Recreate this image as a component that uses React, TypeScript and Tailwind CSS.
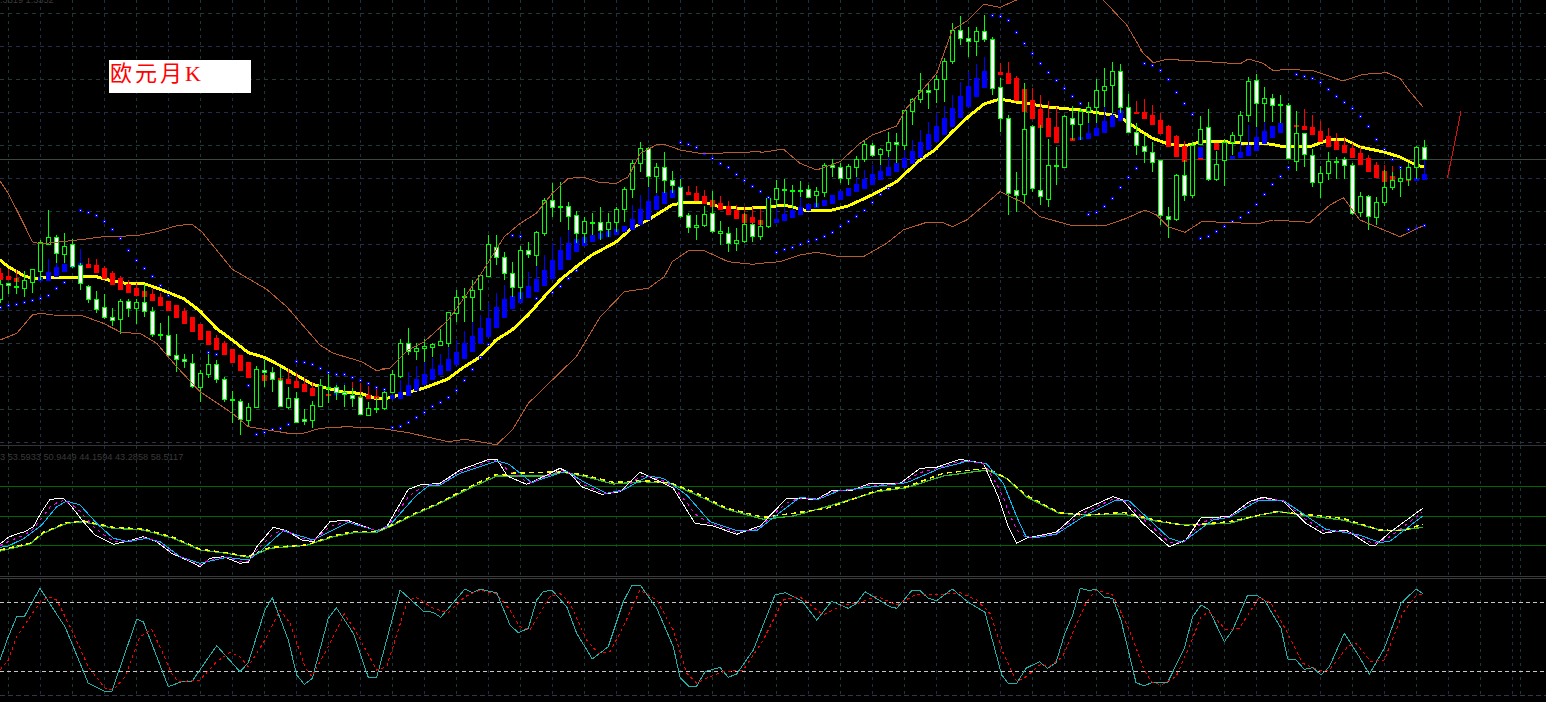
import React from 'react';

type Pt = [number, number];

// "x,y x,y ..." read off 3x crops, so every run has its own crop origin
const run = (ox: number, oy: number, s: string, maxX = Infinity): Pt[] =>
  s.trim().split(/\s+/).map(t => {
    const [x, y] = t.split(',').map(Number);
    return [ox + x / 3, oy + y / 3] as Pt;
  }).filter(p => p[0] < maxX);

const toPoints = (pts: Pt[]) => pts.map(p => `${p[0].toFixed(1)},${p[1].toFixed(1)}`).join(' ');

const interp = (pts: Pt[], x: number) => {
  for (let i = 1; i < pts.length; i++) {
    if (x <= pts[i][0]) {
      const [a, b] = [pts[i - 1], pts[i]];
      return a[1] + ((x - a[0]) / (b[0] - a[0])) * (b[1] - a[1]);
    }
  }
  return pts[pts.length - 1][1];
};

// high, body top, body bottom, low, white fill (index = bar number, x = 8 * index)
const BARS: number[][] = [
  [280,284,299,303,0],[283,283,285,294,1],[278,286,286,294,0],[271,280,288,297,0],[269,269,282,293,0],[240,242,271,280,0],[210,237,244,244,0],[235,237,253,263,1],[233,246,254,263,0],[239,244,266,268,1],
  [263,265,283,290,1],[285,286,299,303,1],[291,299,309,313,1],[294,307,317,319,1],[308,317,320,326,1],[299,301,319,334,0],[299,301,308,317,1],[299,302,308,324,0],[284,302,311,317,1],[307,311,334,337,1],
  [323,334,334,340,0],[316,335,355,357,1],[334,355,359,372,1],[354,359,361,368,1],[354,363,386,388,1],[370,373,387,402,0],[354,364,374,378,0],[360,364,379,383,1],[377,379,399,402,1],[391,399,400,423,1],
  [399,401,419,435,1],[403,407,420,427,0],[366,369,407,408,0],[360,370,372,387,1],[367,372,379,392,1],[368,380,406,407,1],[387,398,407,409,0],[392,398,422,423,1],[409,419,421,425,1],[401,405,420,428,0],
  [379,385,406,407,0],[374,387,387,403,0],[385,387,392,400,1],[385,392,394,407,1],[388,395,398,407,1],[394,397,414,415,1],[402,408,415,416,0],[397,408,408,413,0],[389,392,408,410,0],[370,374,392,393,0],
  [339,343,376,378,0],[328,343,351,355,1],[343,348,351,360,0],[339,346,348,362,0],[343,344,347,357,0],[329,341,345,346,0],[312,312,343,347,0],[290,297,313,322,0],[288,296,296,322,0],[280,290,297,322,0],
  [274,275,289,310,0],[235,244,276,277,0],[235,247,257,265,1],[252,257,273,280,1],[262,273,287,297,1],[246,250,287,299,0],[242,250,254,258,1],[231,232,255,266,0],[198,200,233,236,0],[183,200,207,217,1],
  [182,206,206,222,0],[202,206,216,230,1],[211,215,233,243,1],[217,221,233,243,0],[213,222,222,235,0],[207,222,230,240,1],[213,222,229,237,0],[207,209,222,232,0],[187,189,209,222,0],[160,163,189,198,0],
  [142,148,163,172,0],[147,148,176,187,1],[163,167,176,193,0],[152,167,180,193,1],[171,180,185,193,1],[179,187,216,218,1],[213,215,227,233,1],[215,225,227,240,0],[206,214,225,227,0],[191,213,231,233,1],
  [221,231,233,245,0],[227,233,243,252,1],[228,240,243,251,0],[213,224,241,243,0],[223,224,236,242,1],[220,226,236,240,0],[197,198,226,228,0],[180,188,199,207,0],[179,189,189,207,0],[185,190,190,208,0],
  [181,190,190,197,0],[185,189,197,198,1],[187,191,195,207,0],[163,165,192,197,0],[159,165,167,177,1],[163,167,178,183,1],[164,166,178,185,0],[156,159,167,177,0],[140,144,159,162,0],[143,145,155,157,1],
  [148,149,154,165,0],[132,142,150,157,0],[133,142,144,163,1],[110,110,145,150,0],[98,99,111,125,0],[73,90,99,103,0],[83,90,92,109,1],[75,79,89,103,0],[58,61,79,102,0],[23,30,61,64,0],
  [16,30,38,45,1],[27,38,41,57,1],[27,31,41,56,0],[15,31,39,42,1],[37,39,88,95,1],[78,87,118,132,1],[115,118,193,215,1],[172,190,195,212,1],[83,129,194,203,0],[125,126,188,192,1],
  [125,190,196,205,1],[139,165,199,207,0],[147,165,165,185,0],[115,116,167,168,0],[106,118,124,140,1],[108,111,124,140,0],[102,107,111,123,0],[79,90,107,123,0],[68,86,90,107,0],[62,71,85,113,0],
  [64,71,107,113,1],[94,107,132,132,1],[123,132,145,155,1],[135,146,151,163,1],[142,152,162,172,1],[160,160,215,225,1],[207,216,219,238,1],[174,175,219,221,0],[160,175,195,201,1],[142,145,195,198,0],
  [116,129,144,145,0],[109,127,179,181,1],[151,164,179,181,0],[139,142,160,186,0],[132,135,142,155,0],[111,115,135,142,0],[77,81,115,122,0],[74,80,103,127,1],[87,98,103,122,0],[94,98,105,122,1],
  [95,104,104,123,0],[103,105,158,158,1],[111,133,161,171,0],[133,133,154,167,1],[149,155,182,187,1],[166,173,182,198,0],[152,161,173,180,0],[157,161,161,179,0],[157,159,165,179,1],[163,165,213,215,1],
  [192,196,212,217,0],[195,196,216,230,1],[197,202,217,225,0],[170,187,202,206,0],[172,180,187,190,0],[167,178,181,197,0],[163,167,179,186,0],[146,147,167,179,0],[140,147,159,160,1],
];

// bar number, wick top, body top, body bottom
const RED: number[][] = [
  [0,268,273,280],[1,269,276,280],[2,270,278,282],[3,271,280,282],[11,258,264,268],[12,259,265,273],[13,266,268,279],[14,271,273,285],[15,276,278,290],[16,280,284,293],[17,283,288,296],[18,284,291,297],[19,289,294,301],[20,293,297,306],[21,301,301,311],[22,305,305,318],[23,308,311,324],[24,317,317,332],[25,324,324,340],[26,331,331,345],[27,335,338,350],[28,341,343,355],[29,349,349,363],[30,355,355,371],[31,362,362,378],[33,366,375,381],[35,368,378,380],[36,369,379,384],[37,373,381,388],[38,378,384,392],[39,382,388,396],[41,380,394,396],[44,382,396,397],[45,383,396,399],[46,386,395,399],[47,388,396,399],
  [86,186,192,195],[87,186,193,201],[88,190,196,204],[89,191,200,207],[90,196,203,210],[91,201,206,215],[92,205,210,219],[93,207,214,223],[94,207,217,223],[95,209,220,225],
  [125,63,72,75],[126,62,73,84],[127,76,78,101],[128,83,89,112],[129,88,100,119],[130,95,109,128],[131,101,118,137],[132,107,127,143],[134,138,138,141],
  [142,101,112,114],[143,99,112,119],[144,105,115,125],[145,113,120,134],[146,125,126,147],[147,135,136,157],[148,141,146,162],[150,158,158,160],[152,143,143,150],
  [162,125,125,127],[163,109,126,130],[164,115,127,135],[165,121,131,142],[166,128,136,147],[167,133,141,150],[168,137,145,153],[169,143,148,158],[170,147,153,165],[171,155,158,172],[172,162,165,178],[173,165,171,182],[174,166,176,180],[175,167,180,182],[176,180,180,181],
];
const BLUE: number[][] = [
  [4,279,279,281],[5,277,277,281],[6,259,272,281],[7,262,267,277],[8,255,264,272],[9,266,266,268],[10,249,263,266],[42,383,392,395],[43,383,393,395],[48,396,396,399],[49,395,395,399],
  [50,380,392,399],[51,372,385,396],[52,366,379,391],[53,362,374,385],[54,358,369,380],[55,354,365,375],[56,347,359,371],[57,340,352,365],[58,331,343,359],[59,322,336,352],[60,315,328,344],[61,303,318,337],[62,293,307,328],[63,285,299,318],[64,283,296,309],[65,278,292,303],[66,272,286,298],[67,265,279,292],[68,255,270,286],[69,243,260,279],[70,237,250,270],[71,230,243,260],[72,233,239,252],[73,237,237,246],[74,235,235,242],[75,233,233,239],[76,231,231,237],[77,229,229,235],[78,226,226,232],[79,205,219,230],[80,195,209,225],[81,187,201,220],[82,183,196,210],[83,182,192,204],[84,180,190,198],[85,176,186,190],
  [97,206,219,223],[98,200,214,221],[99,198,210,218],[100,196,207,215],[101,204,204,211],[102,203,203,208],[103,200,200,206],[104,195,195,204],[105,191,191,200],[106,188,188,196],[107,175,184,192],[108,170,179,189],[109,165,174,185],[110,165,171,180],[111,157,167,176],[112,153,163,172],[113,150,158,168],[114,140,151,164],[115,130,142,158],[116,122,134,150],[117,113,126,142],[118,106,118,135],[119,95,108,127],[120,82,96,118],[121,72,86,107],[122,64,78,97],[123,57,71,88],
  [135,120,137,140],[136,123,133,139],[137,115,128,136],[138,107,121,133],[139,94,115,127],[140,88,110,121],[150,147,147,158],[154,156,156,159],[155,139,152,158],[156,125,145,156],[157,127,137,151],[158,122,131,144],[159,126,126,138],[160,123,123,133],[177,178,178,181],[178,160,174,180],
];

// parabolic sar dots: bar number, y
const DOTS = `0,307 1,305 2,304 3,302 4,300 5,298 6,295 7,288 8,282 10,210 11,212 12,215 13,221 14,229 15,238 16,250 17,260 18,268 19,276 20,285 21,295 26,352 27,354 31,385 32,434 33,432 34,429 35,428 36,424 37,361 38,362 39,364 40,368 41,372 42,374 43,374 44,377 45,380 46,383 47,387 48,389 49,427 50,426 51,422 52,417 53,412 54,406 55,402 56,397 57,390 58,380 59,369 60,357 61,344 64,235 65,236 67,298 69,292 70,286 71,278 72,270 85,142 86,144 87,147 88,153 89,158 90,163 91,167 92,174 93,180 94,186 95,191 96,197 97,252 98,249 99,247 100,244 101,241 102,239 103,236 104,232 105,226 106,221 107,216 108,210 109,202 110,194 111,188 124,15 125,16 126,20 127,32 128,43 129,53 130,63 131,72 132,80 133,88 134,96 135,103 136,214 137,212 138,206 139,198 140,187 141,177 142,168 143,63 144,65 145,70 146,79 147,92 148,103 149,114 150,238 151,236 152,231 153,226 154,221 155,217 156,212 157,204 158,194 159,184 160,176 161,167 162,74 163,76 164,78 165,82 166,89 167,96 168,102 169,108 170,116 171,126 172,139 173,149 174,159 175,167 176,229 177,228 178,225`
  .split(' ').map(t => t.split(',').map(Number));

const MA: Pt[] = [
  ...run(0, 200, '0,180 25,200 73,228 97,235 145,233 289,230 337,243 385,251 433,251 481,268 553,297 601,334 649,385 697,420 745,458 793,472 841,497 889,525 937,553 985,566 1033,577 1081,580 1129,596 1153,597'),
  [392,397],[424,388],[448,379],[464,367],[480,357],[496,340],[512,330],[528,315],[544,297],[560,280],[576,267],[592,255],[616,242],[632,228],[648,220],[664,210],[672,205],[688,202],[704,202],[720,207],[736,208],[752,208],[768,207],[784,205],[808,211],[832,210],[848,206],[872,195],[896,182],[920,160],[936,149],[952,132],[968,117],[984,104],[1000,99],[1016,102],[1024,103],[1048,107],[1080,110],[1112,115],[1120,117],[1136,128],[1152,138],[1168,144],[1184,146],[1200,142],[1216,141],[1240,143],[1264,143],[1280,146],[1312,146],[1328,140],[1344,139],[1360,147],[1384,152],[1400,157],[1416,165],[1424,167],
];

const BB_UP: Pt[] = [
  ...run(0, 0, '0,543 25,580 50,630 80,690'),
  ...run(0, 200, '97,125 120,132 250,118 310,110 410,107 470,95 530,77 575,72 605,95 697,208 800,268 860,320 960,435 1000,460 1085,485 1130,512 1165,505'),
  ...run(380, 130, '0,718 30,715 85,660 133,635 205,570 301,435 373,320 421,280 469,250 517,190 565,145 613,142 661,158 709,160 745,140 781,70 829,45 853,43 901,60 973,72 1045,68 1140,65'),
  ...run(760, 0, '0,458 70,447 120,490 170,510 240,485 300,430 337,405 410,378 435,330 530,220 577,90 625,60 672,13 720,22 770,0 800,-6 1000,-6 1030,0 1100,75 1150,160'),
  ...run(1130, 50, '30,0 70,38 110,28 280,38 330,42 355,27 400,40 430,62 470,58 550,62 640,93 700,73 770,68 810,85 840,125 880,172'),
];

const BB_DN: Pt[] = [
  ...run(0, 200, '0,420 50,400 97,345 120,340 160,345 250,348 310,370 365,398 420,400 470,430 530,500 600,575 697,640 745,680 865,700 910,700 960,685 1040,680'),
  ...run(380, 130, '0,895 85,908 205,935 253,928 325,940 349,945 397,900 445,820 517,750 589,680 661,560 700,520 733,485 805,475 853,440 877,395 925,362 973,362 1045,395 1117,403'),
  ...run(760, 0, '0,790 60,785 120,765 170,757 240,770 310,770 380,730 430,690 500,667 550,668 577,680 620,660 720,575 790,608 840,650 930,675 1040,675 1100,655'),
  ...run(1130, 50, '0,500 45,480 80,495 115,530 165,547 215,515 300,517 380,522 430,510 540,517 600,465 640,443 690,510 810,560 880,527'),
];

// first indicator window
const three = (a: string, b: string, c: string): Pt[] => [...run(0, 440, a, 510), ...run(510, 440, b, 1026), ...run(1026, 440, c)];

const K_WHITE = three(
  '0,312 25,292 50,282 73,276 100,260 125,215 150,178 190,175 215,200 250,245 285,285 340,313 385,303 430,290 470,305 515,340 560,360 600,380 630,355 670,350 720,370 745,367 770,320 820,262 860,272 905,300 940,305 990,245 1040,240 1130,273 1160,260 1225,148 1260,135 1320,130 1380,90 1470,57 1490,57 1520,105',
  '0,112 50,133 100,110 150,85 180,100 215,140 275,163 330,155 390,97 440,120 490,145 555,250 610,258 680,283 750,258 830,175 920,178 965,152 1030,150 1075,132 1170,130 1230,85 1280,82 1350,58 1420,70 1465,170 1495,260 1520,310',
  '0,295 90,277 160,215 260,170 290,180 350,250 430,320 480,300 525,233 610,230 670,185 710,172 770,183 840,250 890,280 960,270 1030,315 1050,315 1090,278 1190,205',
);
const K_CYAN = three(
  '0,322 25,318 73,295 125,255 170,200 200,183 240,195 290,250 340,295 385,305 440,295 480,305 540,350 600,370 680,352 745,360 780,335 850,272 940,300 1045,247 1130,272 1170,255 1250,165 1290,135 1320,135 1380,100 1490,63 1520,70',
  '0,75 65,128 110,112 170,93 220,125 290,160 340,150 415,108 460,115 530,165 600,245 680,272 740,272 800,225 870,172 925,178 985,153 1090,140 1190,128 1290,85 1375,63 1430,72 1480,130 1520,230',
  '0,290 30,293 90,283 180,225 270,180 310,183 430,295 470,307 560,240 610,232 700,180 770,180 900,268 1000,285 1060,307 1090,305 1190,228',
);
const K_GREEN = three(
  '0,333 90,312 130,280 200,250 250,245 340,265 430,270 520,295 600,330 680,340 745,352 810,325 920,316 1000,290 1060,278 1130,277 1170,260 1240,225 1320,190 1420,140 1490,108 1520,108',
  '0,108 100,108 160,97 220,108 310,132 400,125 480,130 560,165 650,208 760,238 850,228 950,200 1100,155 1190,143 1300,108 1430,90 1490,115',
  '0,170 100,220 180,225 290,222 400,245 480,255 610,250 700,225 760,215 850,228 950,240 1070,272 1130,270 1190,262',
);
const K_YELLOW = three(
  '0,330 90,310 130,277 200,248 250,243 340,262 430,267 520,292 600,328 680,338 745,350 810,322 920,315 1000,287 1060,275 1130,274 1170,258 1240,222 1320,187 1420,135 1490,103 1520,105',
  '0,100 160,95 220,105 310,127 400,122 480,128 560,160 650,205 760,232 850,220 950,205 1100,152 1190,140 1300,100 1430,85 1490,115',
  '0,165 100,218 190,225 290,217 400,243 480,257 610,245 750,215 890,228 950,235 1060,270 1130,272 1190,253',
);
const K_MID: Pt[] = [];
for (let x = 0; x <= 1423; x += 2) K_MID.push([x, (interp(K_WHITE, x) + interp(K_CYAN, x)) / 2]);

// second indicator window
const S_MAIN = three(
  '0,660 25,590 50,530 73,530 120,445 175,530 195,560 265,730 315,755 335,755 410,538 430,545 505,740 545,725 575,725 650,617 720,695 745,668 795,510 817,473 865,600 890,705 913,733 937,715 985,535 1009,503 1060,580 1105,712 1130,712 1200,450 1270,513 1300,517 1322,532 1395,447 1417,458 1440,448 1490,458',
  '0,555 25,578 55,565 80,480 100,455 125,450 170,500 200,580 247,657 295,620 340,485 365,437 392,437 440,505 490,620 510,712 537,740 560,738 585,695 630,682 655,712 680,702 730,630 795,465 825,458 875,482 920,540 965,484 1015,505 1040,490 1065,455 1140,500 1160,505 1205,452 1230,452 1255,475 1280,482 1327,447 1375,487 1425,517 1475,705 1495,730 1520,730',
  '0,685 40,665 65,685 90,668 115,585 140,525 163,445 190,452 210,447 235,472 260,475 285,540 330,728 355,737 380,727 425,727 475,625 500,530 525,495 548,508 595,605 620,570 665,465 690,465 715,480 765,565 785,657 810,660 835,688 860,683 885,705 910,680 955,580 1000,650 1030,703 1075,625 1125,490 1170,447 1192,462',
);
const S_SIGNAL = three(
  '0,690 25,660 50,590 120,487 145,470 170,480 215,570 265,680 315,745 340,750 375,710 420,590 455,568 480,620 515,700 535,725 600,720 650,665 690,637 720,650 745,680 795,600 840,510 870,550 915,680 935,710 985,620 1033,522 1065,570 1130,690 1160,680 1220,490 1245,470 1300,505 1345,518 1395,470 1440,450 1490,462',
  '0,510 30,560 60,570 120,470 150,460 180,490 230,600 265,640 300,635 340,560 390,450 440,480 490,570 530,700 560,730 600,710 640,695 700,690 760,600 820,480 870,470 940,525 1000,495 1045,490 1100,468 1160,495 1220,462 1280,465 1350,458 1400,480 1440,520 1480,640 1520,725',
  '0,710 45,672 70,680 110,650 150,555 180,490 210,450 260,465 310,570 355,690 375,725 405,735 450,710 490,620 525,530 550,515 600,570 640,565 700,472 735,490 780,570 830,670 880,690 910,690 965,620 990,610 1035,665 1075,660 1130,520 1170,467 1192,462',
);

const VX: number[] = [];
for (let x = 8; x <= 1512; x += 32) VX.push(x);
VX.push(1520);

const Verticals = ({ y1, y2 }: { y1: number; y2: number }) => (
  <>
    {VX.map((x, i) => (
      <line key={x} x1={x + 0.5} x2={x + 0.5} y1={y1} y2={y2} stroke={i % 2 ? '#212c48' : '#1a3839'} strokeDasharray="3 4" />
    ))}
  </>
);

const Line = ({ pts, color, width = 1, dash }: { pts: Pt[]; color: string; width?: number; dash?: string }) => (
  <polyline points={toPoints(pts)} fill="none" stroke={color} strokeWidth={width} strokeDasharray={dash} />
);

const Pane = ({ top, height, children }: { top: number; height: number; children: React.ReactNode }) => (
  <svg width={1546} height={height} viewBox={`0 ${top} 1546 ${height}`} shapeRendering="crispEdges" className="block shrink-0">
    {children}
  </svg>
);

const Candle = ({ k, b }: { k: number; b: number[] }) => {
  const [hi, top, bot, lo, white] = b;
  const x = 8 * k;
  return (
    <g>
      <rect x={x} y={hi} width={1} height={lo - hi} fill="#00ff00" />
      {bot - top < 1 ? (
        <rect x={x - 2} y={top} width={5} height={2} fill="#00ff00" />
      ) : (
        <rect x={x - 1.5} y={top + 0.5} width={4} height={bot - top} fill={white ? '#ffffff' : '#000000'} stroke="#00ff00" />
      )}
    </g>
  );
};

const Trend = ({ list, color }: { list: number[][]; color: string }) => (
  <>
    {list.map(([k, wick, top, bot]) => (
      <g key={k} fill={color}>
        <rect x={8 * k} y={wick} width={1} height={top - wick} />
        <rect x={8 * k - 2} y={top} width={5} height={Math.max(bot - top, 1)} />
      </g>
    ))}
  </>
);

export default function App() {
  const hy: number[] = [];
  for (let y = 13; y <= 409; y += 33) hy.push(y);

  return (
    <div className="relative flex h-[702px] w-[1546px] flex-col overflow-hidden bg-black font-['Liberation_Sans',sans-serif]">
      <Pane top={0} height={445}>
        <Verticals y1={0} y2={445} />
        {hy.map((y, i) => (
          <line key={y} x1={0} x2={1546} y1={y + 0.5} y2={y + 0.5} stroke={i % 2 ? '#262c4a' : '#1f3938'} strokeDasharray="4 4" />
        ))}
        <line x1={0} x2={1546} y1={159.5} y2={159.5} stroke="#3c463c" />
        <line x1={0} x2={1546} y1={442.5} y2={442.5} stroke="#2c3048" strokeDasharray="4 4" />
        <Line pts={MA} color="#ffff00" width={3} />
        <Trend list={RED} color="#ff0000" />
        <Trend list={BLUE} color="#0000ff" />
        {BARS.map((b, k) => <Candle key={k} k={k} b={b} />)}
        {DOTS.map(([k, y]) => (
          <g key={k}>
            <rect x={8 * k - 1} y={y - 1} width={3} height={3} fill="#0000ff" />
            <rect x={8 * k} y={y} width={1} height={1} fill="#ffffff" />
          </g>
        ))}
        <Line pts={BB_UP} color="#b85c2e" />
        <Line pts={BB_DN} color="#b85c2e" />
        <line x1={1447.5} y1={178} x2={1461} y2={111} stroke="#e01010" />
      </Pane>

      <div className="h-px shrink-0 bg-[#333333]" />

      <Pane top={446} height={130}>
        <Verticals y1={446} y2={576} />
        <line x1={0} x2={1546} y1={486.5} y2={486.5} stroke="#006600" />
        <line x1={0} x2={1546} y1={516.5} y2={516.5} stroke="#006600" />
        <line x1={0} x2={1546} y1={545.5} y2={545.5} stroke="#006600" />
        <Line pts={K_GREEN} color="#32b432" width={1.3} />
        <Line pts={K_YELLOW} color="#ffff00" width={1.5} dash="5 4" />
        <Line pts={K_WHITE} color="#ffffff" />
        <Line pts={K_CYAN} color="#00bfff" />
        <Line pts={K_MID} color="#ff00ff" dash="3 4" />
      </Pane>

      <div className="h-px shrink-0 bg-[#3a3a3a]" />
      <div className="h-px shrink-0 bg-black" />
      <div className="h-px shrink-0 bg-[#3a3a3a]" />

      <Pane top={579} height={123}>
        <Verticals y1={579} y2={695} />
        <line x1={0} x2={1546} y1={602.5} y2={602.5} stroke="#c8c8c8" strokeDasharray="4 3" />
        <line x1={0} x2={1546} y1={671.5} y2={671.5} stroke="#c8c8c8" strokeDasharray="4 3" />
        <Line pts={S_MAIN} color="#20b2aa" />
        <Line pts={S_SIGNAL} color="#ff0000" dash="3 3" />
        <line x1={0} x2={1546} y1={695.5} y2={695.5} stroke="#333648" strokeDasharray="5 3" />
      </Pane>

      <div className="absolute left-0 top-[-5px] whitespace-pre text-[9.2px] leading-[11px] text-[#3a3a3a]">.3319 1.3352</div>
      <div className="absolute left-0 top-[452px] whitespace-pre text-[9.2px] leading-[11px] text-[#3a3a3a]">3 53.5933 50.9449 44.1594 43.2858 58.5117</div>

      <div className="absolute left-[109px] top-[60px] h-[33px] w-[142px] bg-white pl-px pt-px font-['Liberation_Serif','Noto_Sans_CJK_SC',serif] text-[22px] leading-[26px] tracking-[3px] text-[#ff0000]">
        欧元月K
      </div>
    </div>
  );
}
